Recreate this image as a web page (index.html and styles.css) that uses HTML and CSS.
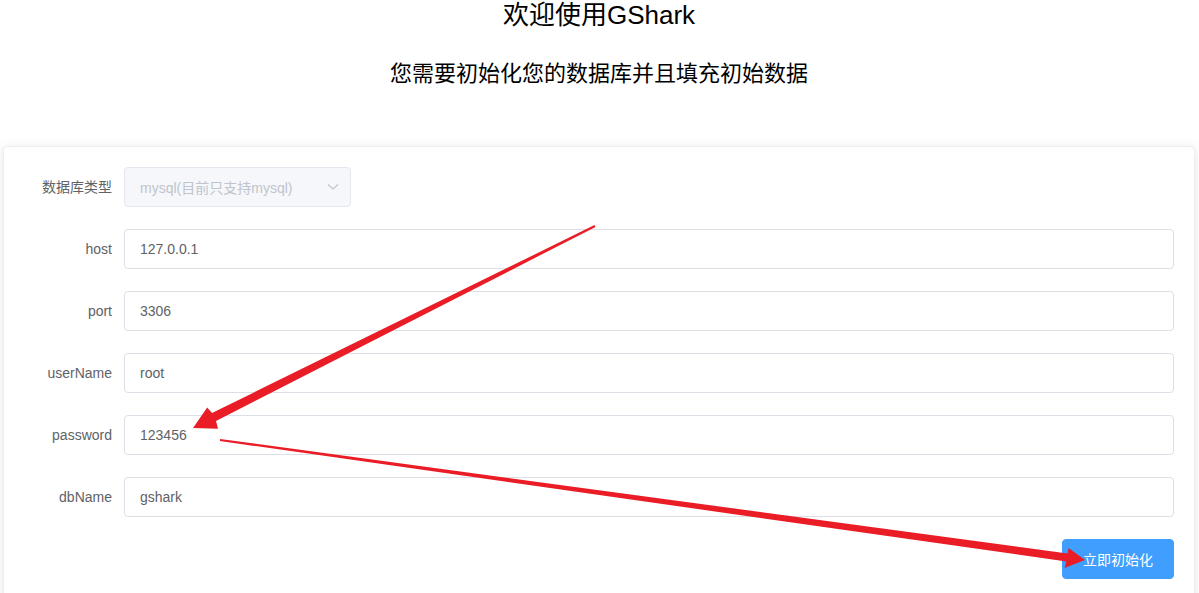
FILE: index.html
```html
<!DOCTYPE html>
<html lang="zh-CN">
<head>
<meta charset="utf-8">
<title>GShark 初始化</title>
<link rel="stylesheet" href="styles.css">
</head>
<body>
<div class="page">
  <header class="header">
    <h1 class="title">欢迎使用GShark</h1>
    <h2 class="subtitle">您需要初始化您的数据库并且填充初始数据</h2>
  </header>
  <section class="card">
    <form class="form">
      <div class="form-item">
        <label class="form-label">数据库类型</label>
        <div class="select is-disabled">
          <span class="select-placeholder">mysql(目前只支持mysql)</span>
          <svg class="select-arrow" width="12" height="8" viewBox="0 0 12 8"><path d="M1 1.5 L6 6 L11 1.5" fill="none" stroke="#c0c4cc" stroke-width="1.2"/></svg>
        </div>
      </div>
      <div class="form-item">
        <label class="form-label">host</label>
        <input class="input" type="text" value="127.0.0.1">
      </div>
      <div class="form-item">
        <label class="form-label">port</label>
        <input class="input" type="text" value="3306">
      </div>
      <div class="form-item">
        <label class="form-label">userName</label>
        <input class="input" type="text" value="root">
      </div>
      <div class="form-item">
        <label class="form-label">password</label>
        <input class="input" type="text" value="123456">
      </div>
      <div class="form-item">
        <label class="form-label">dbName</label>
        <input class="input" type="text" value="gshark">
      </div>
      <div class="form-item actions">
        <button class="btn-primary" type="button">立即初始化</button>
      </div>
    </form>
  </section>
  <svg class="annotations" width="1199" height="593" viewBox="0 0 1199 593">
    <polygon fill="#ea1c25" points="595.5,226.9 216,421 218,428.8 193,428 207.2,407.4 212,413 594.5,225.1"/>
    <polygon fill="#ea1c25" points="219.9,441 1066.4,561.5 1064.5,568 1085,560 1068.5,548 1067.6,553.5 220.1,439"/>
  </svg>
</div>
</body>
</html>
```

FILE: styles.css
```css
* { box-sizing: border-box; }
html, body { margin: 0; padding: 0; background: #fff; }
body {
  font-family: "Liberation Sans", "Noto Sans CJK SC", sans-serif;
  font-size: 14px;
  color: #606266;
}
.page {
  position: relative;
  width: 1199px;
  height: 593px;
  overflow: hidden;
  padding: 0 4px 0 3px;
}
.header { text-align: center; color: #000; }
.title {
  margin: 0;
  font-size: 26px;
  line-height: 30px;
  font-weight: normal;
}
.subtitle {
  margin: 29px 0 0;
  font-size: 22px;
  line-height: 30px;
  font-weight: normal;
}
.card {
  margin-top: 57px;
  border: 1px solid #ebeef5;
  border-radius: 4px;
  background: #fff;
  box-shadow: 0 2px 12px 0 rgba(0, 0, 0, 0.1);
  padding: 20px;
  height: 520px;
}
.form { display: flex; flex-direction: column; gap: 22px; }
.form-item { display: flex; align-items: center; height: 40px; }
.form-label {
  width: 100px;
  flex: none;
  padding-right: 12px;
  text-align: right;
  color: #606266;
  font-size: 14px;
  line-height: 40px;
}
.input {
  flex: 1;
  height: 40px;
  border: 1px solid #dcdfe6;
  border-radius: 4px;
  padding: 0 15px;
  font-family: "Liberation Sans", "Noto Sans CJK SC", sans-serif;
  font-size: 14px;
  color: #606266;
  background: #fff;
  outline: none;
}
.select {
  width: 227px;
  height: 40px;
  border: 1px solid #e4e7ed;
  border-radius: 4px;
  background: #f5f7fa;
  display: flex;
  align-items: center;
  justify-content: space-between;
  padding: 0 11px 0 15px;
}
.select-placeholder { color: #c0c4cc; font-size: 14px; }
.select-arrow { display: block; }
.actions { justify-content: flex-end; }
.btn-primary {
  height: 40px;
  padding: 0 20px;
  border: 1px solid #409eff;
  border-radius: 4px;
  background: #409eff;
  color: #fff;
  font-family: "Liberation Sans", "Noto Sans CJK SC", sans-serif;
  font-size: 14px;
}
.annotations {
  position: absolute;
  top: 0;
  left: 0;
  pointer-events: none;
}
```
